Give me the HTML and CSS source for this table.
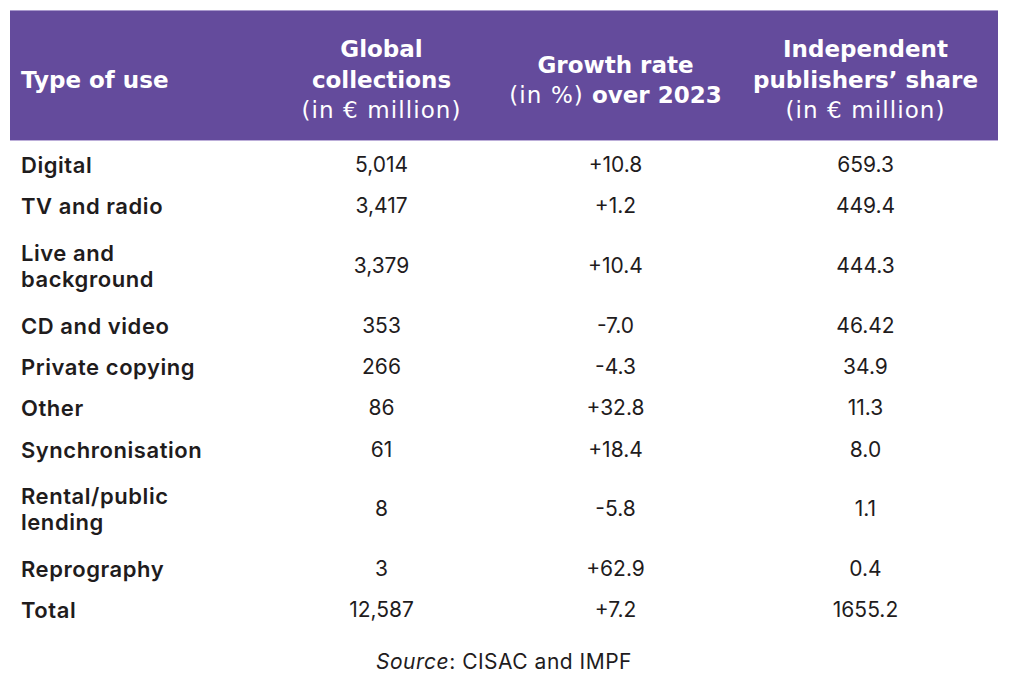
FILE: index.html
```html
<!DOCTYPE html>
<html lang="en">
<head>
<meta charset="utf-8">
<title>Collections by type of use</title>
<link rel="stylesheet" href="styles.css">
</head>
<body>
<div class="page">
  <table class="data">
    <colgroup>
      <col class="c1"><col class="c2"><col class="c3"><col class="c4">
    </colgroup>
    <thead>
      <tr>
        <th class="type">Type of use</th>
        <th>Global<br>collections<br><span class="light">(in € million)</span></th>
        <th>Growth rate<br><span class="light">(in %)</span> over 2023</th>
        <th>Independent<br>publishers’ share<br><span class="light">(in € million)</span></th>
      </tr>
    </thead>
    <tbody>
      <tr class="first"><td class="label">Digital</td><td>5,014</td><td>+10.8</td><td>659.3</td></tr>
      <tr class="one"><td class="label">TV and radio</td><td>3,417</td><td>+1.2</td><td>449.4</td></tr>
      <tr class="two"><td class="label">Live and<br>background</td><td>3,379</td><td>+10.4</td><td>444.3</td></tr>
      <tr class="one"><td class="label">CD and video</td><td>353</td><td>-7.0</td><td>46.42</td></tr>
      <tr class="one"><td class="label">Private copying</td><td>266</td><td>-4.3</td><td>34.9</td></tr>
      <tr class="one"><td class="label">Other</td><td>86</td><td>+32.8</td><td>11.3</td></tr>
      <tr class="one"><td class="label">Synchronisation</td><td>61</td><td>+18.4</td><td>8.0</td></tr>
      <tr class="two"><td class="label">Rental/public<br>lending</td><td>8</td><td>-5.8</td><td>1.1</td></tr>
      <tr class="one"><td class="label">Reprography</td><td>3</td><td>+62.9</td><td>0.4</td></tr>
      <tr class="one"><td class="label">Total</td><td>12,587</td><td>+7.2</td><td>1655.2</td></tr>
    </tbody>
  </table>
  <p class="source"><em>Source</em>: CISAC and IMPF</p>
</div>
</body>
</html>
```

FILE: styles.css
```css
html, body {
  margin: 0;
  background: #ffffff;
}

.page {
  padding: 10px 0 0 10px;
}

.data {
  width: 988px;
  border-collapse: separate;
  border-spacing: 0;
  table-layout: fixed;
}

.c1 { width: 255px; }
.c2 { width: 233px; }
.c3 { width: 235px; }
.c4 { width: 265px; }

.data thead tr {
  height: 131px;
}

.data th {
  background: #644b9c;
  color: #ffffff;
  border-top: 1px solid #a898cc;
  border-bottom: 1px solid #bcaed9;
  font-family: "DejaVu Sans", sans-serif;
  font-weight: 700;
  font-size: 23px;
  line-height: 30.5px;
  padding: 9px 0 0 0;
  vertical-align: middle;
  text-align: center;
}

.data th.type {
  text-align: left;
  padding-left: 11px;
}

.light {
  font-weight: 400;
  letter-spacing: 1.1px;
}

.data td {
  font-family: Inter, "Liberation Sans", sans-serif;
  font-size: 21px;
  line-height: 26px;
  color: #1f1c1d;
  text-align: center;
  vertical-align: middle;
  padding: 0;
}

.data td.label {
  text-align: left;
  padding-left: 11px;
  font-weight: 600;
  font-size: 22px;
  letter-spacing: 0.55px;
}

.data tr.first {
  height: 44.9px;
}

.data tr.first td {
  padding-top: 3.7px;
}

.data tr.one {
  height: 41.2px;
}

.data tr.two {
  height: 78.4px;
}

.source {
  width: 988px;
  margin: 18.4px 0 0 0;
  text-align: center;
  font-family: Inter, "Liberation Sans", sans-serif;
  font-size: 21px;
  line-height: 26px;
  letter-spacing: 0.5px;
  color: #1f1c1d;
}
```
